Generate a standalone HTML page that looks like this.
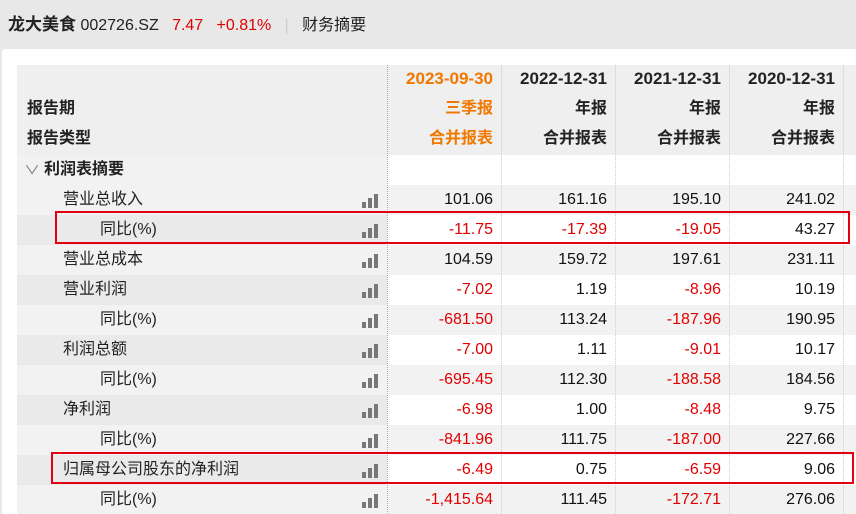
<!DOCTYPE html><html><head><meta charset="utf-8"><style>
*{margin:0;padding:0;box-sizing:border-box}
html,body{width:856px;height:514px;overflow:hidden}
body{background:#e8e8e8;font-family:"Liberation Sans","Noto Sans CJK SC",sans-serif;position:relative;color:#222}
.top{position:absolute;top:10px;left:8px;font-size:16px;white-space:nowrap}
.panel{position:absolute;left:2px;top:49px;width:854px;height:465px;background:#fff;border-radius:4px 0 0 0}
.c{position:absolute;width:114px;height:30px;text-align:right;padding-right:8px;font-size:16px;line-height:30px;white-space:nowrap}
.lbl{position:absolute;font-size:16px;line-height:30px;white-space:nowrap}
.red{color:#e00000}
.box{position:absolute;border:2px solid #e00012}
#t{position:absolute;left:0;top:0;width:856px;height:514px;overflow:hidden}
</style></head><body>
<div class="top"><b style="font-size:17px">龙大美食</b> 002726.SZ &nbsp;&nbsp;<span class="red">7.47 &nbsp;&nbsp;+0.81%</span> &nbsp;&nbsp;<span style="color:#ccc">|</span>&nbsp;&nbsp; 财务摘要</div>
<div class="panel"></div>
<div id="t"></div>
<script>
const cols=[387,501,615,729,843];
let h='';
h+=`<div style="position:absolute;left:17px;top:65px;width:839px;height:90px;background:#efefef"></div>`;
h+=`<div style="position:absolute;left:17px;top:155px;width:370px;height:30px;background:#f2f2f2"></div>`;
const hd=[['2023-09-30','三季报','#f07800'],['2022-12-31','年报','#222'],['2021-12-31','年报','#222'],['2020-12-31','年报','#222'],['2019-12-31','年报','#f07800']];
hd.forEach((d,i)=>{const x=cols[i];[0,1,2].forEach(j=>{const t=j==0?d[0]:j==1?d[1]:'合并报表';h+=`<div class="c" style="left:${x}px;top:${64+j*30}px;font-weight:bold;color:${d[2]};font-size:${j==0?17:16}px">${t}</div>`})});
h+=`<div class="lbl" style="left:27px;top:94px;font-weight:bold">报告期</div><div class="lbl" style="left:27px;top:124px;font-weight:bold">报告类型</div>`;
h+=`<div class="lbl" style="left:26px;top:155px;font-weight:bold;font-size:16px"><span style="font-weight:normal;color:#777;font-size:12px;display:inline-block;transform:scaleX(1.3);margin-right:6px">∨</span>利润表摘要</div>`;
const rows=[['营业总收入',1,['101.06','161.16','195.10','241.02']],['同比(%)',2,['-11.75','-17.39','-19.05','43.27']],['营业总成本',1,['104.59','159.72','197.61','231.11']],['营业利润',1,['-7.02','1.19','-8.96','10.19']],['同比(%)',2,['-681.50','113.24','-187.96','190.95']],['利润总额',1,['-7.00','1.11','-9.01','10.17']],['同比(%)',2,['-695.45','112.30','-188.58','184.56']],['净利润',1,['-6.98','1.00','-8.48','9.75']],['同比(%)',2,['-841.96','111.75','-187.00','227.66']],['归属母公司股东的净利润',1,['-6.49','0.75','-6.59','9.06']],['同比(%)',2,['-1,415.64','111.45','-172.71','276.06']]];
rows.forEach((r,i)=>{const y=185+i*30;const odd=i%2==0;
h+=`<div style="position:absolute;left:17px;top:${y}px;width:370px;height:30px;background:${odd?'#f2f2f2':'#eaeaea'}"></div>`;
h+=`<div style="position:absolute;left:388px;top:${y}px;width:468px;height:30px;background:${odd?'#f2f2f2':'#fff'}"></div>`;
h+=`<div class="lbl" style="left:${r[1]==1?63:100}px;top:${y}px">${r[0]}</div>`;
h+=`<div style="position:absolute;left:362px;top:${y+9}px;width:16px;height:14px"><i style="position:absolute;left:0;bottom:0;width:4px;height:6px;background:#777"></i><i style="position:absolute;left:6px;bottom:0;width:4px;height:10px;background:#777"></i><i style="position:absolute;left:12px;bottom:0;width:4px;height:14px;background:#777"></i></div>`;
r[2].forEach((v,j)=>{h+=`<div class="c" style="left:${cols[j]}px;top:${y}px;color:${v[0]=='-'?'#e00000':'#111'}">${v}</div>`});
});
cols.forEach(x=>{h+=`<div style="position:absolute;left:${x}px;top:65px;height:449px;border-left:1px dotted ${x==387?'#aaa':'#ccc'}"></div>`});
h+=`<div class="box" style="left:55px;top:211px;width:795px;height:33px"></div>`;
h+=`<div class="box" style="left:51px;top:452px;width:803px;height:32px"></div>`;
document.getElementById('t').innerHTML=h;
</script>
</body></html>
